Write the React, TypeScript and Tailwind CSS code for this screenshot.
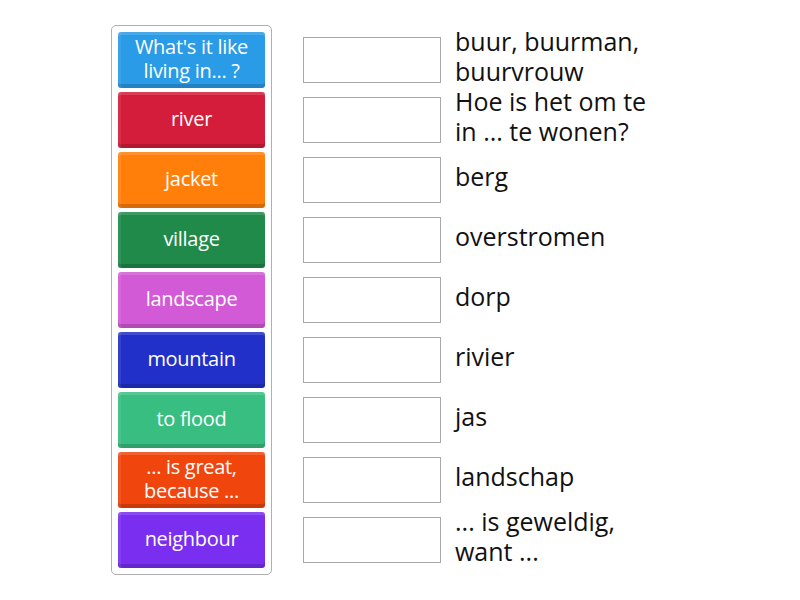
const tiles = [
  { label: "What's it like living in... ?", bg: 'bg-[#2a9be6]' },
  { label: 'river', bg: 'bg-[#d41d3a]' },
  { label: 'jacket', bg: 'bg-[#ff7f0a]' },
  { label: 'village', bg: 'bg-[#1f8a4a]' },
  { label: 'landscape', bg: 'bg-[#d35ad6]' },
  { label: 'mountain', bg: 'bg-[#2130c8]' },
  { label: 'to flood', bg: 'bg-[#38be80]' },
  { label: '... is great, because ...', bg: 'bg-[#f0460e]' },
  { label: 'neighbour', bg: 'bg-[#7a2ef0]' },
];

const answers = [
  'buur, buurman, buurvrouw',
  'Hoe is het om te in ... te wonen?',
  'berg',
  'overstromen',
  'dorp',
  'rivier',
  'jas',
  'landschap',
  '... is geweldig, want ...',
];

export default function App() {
  return (
    <div className="w-[800px] h-[600px] bg-white pt-[25px] pl-[111px] font-['Open_Sans',sans-serif]">
      <div className="flex">
        {/* tile column */}
        <div className="w-[161px] border border-[#b0b0b0] rounded-[5px] p-[6px] flex flex-col gap-1">
          {tiles.map((t) => (
            <div
              key={t.label}
              className={`${t.bg} h-14 rounded-[3px] flex items-center justify-center text-center px-1 text-white text-[20px] leading-[24px] -tracking-[0.3px] pb-[3px] shadow-[inset_0_3px_0_rgba(255,255,255,0.14),inset_3px_0_0_rgba(255,255,255,0.08),inset_0_-4px_0_rgba(0,0,0,0.16)]`}
            >
              {t.label}
            </div>
          ))}
        </div>

        {/* drop targets */}
        <div className="ml-[31px] pt-[7px] flex flex-col gap-1">
          {answers.map((a) => (
            <div key={a} className="h-14 flex items-center">
              <div className="w-[138px] h-[46px] border border-[#a8a8a8] bg-white shrink-0" />
              <div className="ml-[14px] w-[215px] text-[25px] leading-[30px] text-[#111] -mt-[9px]">
                {a}
              </div>
            </div>
          ))}
        </div>
      </div>
    </div>
  );
}
